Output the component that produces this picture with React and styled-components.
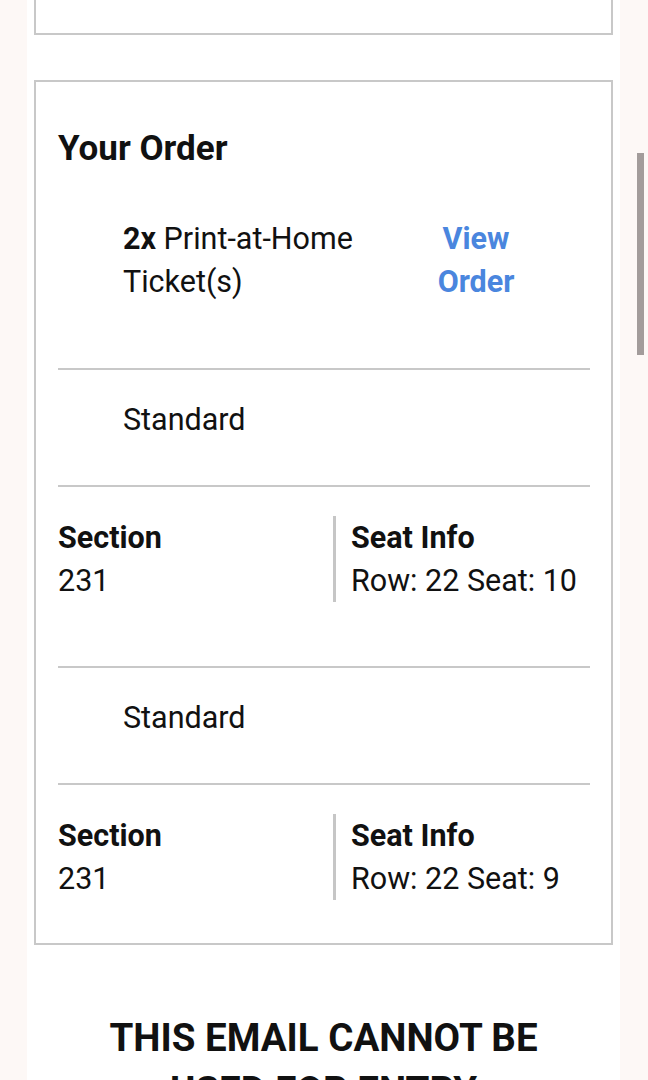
import React from "react";
import styled, { createGlobalStyle } from "styled-components";

const GlobalStyle = createGlobalStyle`
  html, body {
    margin: 0;
    padding: 0;
    background: #fdf8f6;
    font-family: Roboto, "Noto Sans", "Liberation Sans", sans-serif;
    color: #111;
  }
  * { box-sizing: border-box; }
`;

const Page = styled.div`
  position: relative;
  height: 1080px;
  overflow: hidden;
  padding-left: 27px;
`;

const Column = styled.div`
  width: 593px;
  min-height: 100%;
  background: #fff;
  padding: 0 7px;
`;

const Card = styled.div`
  border: 2px solid #c8c8c8;
  background: #fff;
  ${(p) => (p.$cut ? "border-top: none; height: 35px;" : "")}
  ${(p) => (p.$spaced ? "margin-top: 45px; padding: 47px 21px 43px 22px;" : "")}
`;

const Title = styled.h2`
  margin: 0;
  font-size: 35px;
  line-height: 40px;
  font-weight: 700;
  color: #111;
`;

const OrderRow = styled.div`
  display: flex;
  align-items: flex-start;
  margin-top: 48px;
  padding-bottom: 65px;
  border-bottom: 2px solid #c8c8c8;
`;

const ProductCell = styled.div`
  width: 310px;
  padding-left: 65px;
  font-size: 30.5px;
  line-height: 43px;
`;

const Bold = styled.b`
  font-weight: 700;
`;

const LinkCell = styled.div`
  flex: 1;
  display: flex;
  justify-content: center;
  padding-right: 6px;
`;

const ViewLink = styled.a`
  display: inline-block;
  width: 100px;
  text-align: center;
  font-size: 30.5px;
  line-height: 43px;
  font-weight: 700;
  color: #4a86de;
  text-decoration: none;
`;

const TypeRow = styled.div`
  padding: 28px 0 0 65px;
  height: 117px;
  font-size: 30.5px;
  line-height: 43px;
  border-bottom: 2px solid #c8c8c8;
`;

const SeatRow = styled.div`
  display: grid;
  grid-template-columns: 275px 1fr;
  padding-top: 29px;
  ${(p) =>
    p.$last
      ? ""
      : "padding-bottom: 64px; border-bottom: 2px solid #c8c8c8;"}
`;

const SeatCell = styled.div`
  font-size: 30.5px;
  line-height: 43px;
  ${(p) => (p.$divided ? "border-left: 3px solid #c6c6c6; padding-left: 15px;" : "")}
`;

const Label = styled.div`
  font-weight: 700;
`;

const Warning = styled.h1`
  margin: 66px 0 0;
  text-align: center;
  font-size: 38.5px;
  line-height: 53px;
  font-weight: 700;
  color: #111;
`;

const Scrollbar = styled.div`
  position: absolute;
  left: 637px;
  top: 153px;
  width: 7px;
  height: 202px;
  background: #a39c9b;
`;

const tickets = [
  { section: "231", seat: "Row: 22 Seat: 10" },
  { section: "231", seat: "Row: 22 Seat: 9" },
];

export default function App() {
  return (
    <>
      <GlobalStyle />
      <Page>
        <Column>
          <Card $cut />
          <Card $spaced>
            <Title>Your Order</Title>
            <OrderRow>
              <ProductCell>
                <Bold>2x</Bold> Print-at-Home Ticket(s)
              </ProductCell>
              <LinkCell>
                <ViewLink href="#">View Order</ViewLink>
              </LinkCell>
            </OrderRow>
            {tickets.map((t, i) => (
              <React.Fragment key={i}>
                <TypeRow>Standard</TypeRow>
                <SeatRow $last={i === tickets.length - 1}>
                  <SeatCell>
                    <Label>Section</Label>
                    <div>{t.section}</div>
                  </SeatCell>
                  <SeatCell $divided>
                    <Label>Seat Info</Label>
                    <div>{t.seat}</div>
                  </SeatCell>
                </SeatRow>
              </React.Fragment>
            ))}
          </Card>
          <Warning>
            THIS EMAIL CANNOT BE
            <br />
            USED FOR ENTRY
          </Warning>
        </Column>
        <Scrollbar />
      </Page>
    </>
  );
}
